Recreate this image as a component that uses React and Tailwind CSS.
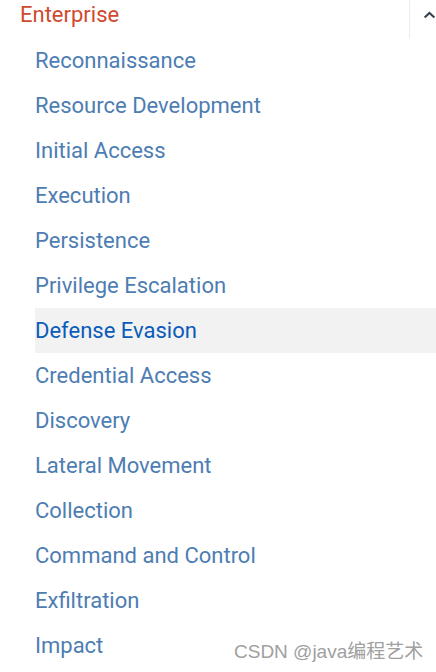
import React from "react";

const items = [
  "Reconnaissance",
  "Resource Development",
  "Initial Access",
  "Execution",
  "Persistence",
  "Privilege Escalation",
  "Defense Evasion",
  "Credential Access",
  "Discovery",
  "Lateral Movement",
  "Collection",
  "Command and Control",
  "Exfiltration",
  "Impact",
];

export default function App() {
  return (
    <div className="relative w-[436px] h-[672px] bg-white overflow-hidden" style={{ fontFamily: "Roboto, 'Noto Sans', sans-serif" }}>
      <div className="flex h-[38px] items-start">
        <div className="flex-1 pl-[20px] pt-[4px] text-[22px] text-[#cf4a2e] leading-none">Enterprise</div>
        <div className="w-px h-[38px] bg-[#ececec]" />
        <div className="w-[26px] h-[38px] flex items-start pt-[10px] pl-[13px]">
          <svg width="16" height="10" viewBox="0 0 16 10">
            <path d="M2 8 L8 2.5 L14 8" fill="none" stroke="#38404a" strokeWidth="2.6" />
          </svg>
        </div>
      </div>
      <div className="pl-[35px] flex flex-col">
        {items.map((t) => (
          <div
            key={t}
            className={
              t === "Defense Evasion"
                ? "h-[45px] flex items-center text-[22px] text-[#0b5bb9] bg-[#f2f2f2]"
                : "h-[45px] flex items-center text-[22px] text-[#4d7db2]"
            }
          >
            {t}
          </div>
        ))}
      </div>
      <div
        className="absolute left-[234px] top-[640px] text-[19px] text-[#a0a0a0] leading-[24px] whitespace-nowrap"
        style={{ fontFamily: "'Liberation Sans', 'Noto Sans CJK SC', sans-serif" }}
      >
        CSDN @java编程艺术
      </div>
    </div>
  );
}
